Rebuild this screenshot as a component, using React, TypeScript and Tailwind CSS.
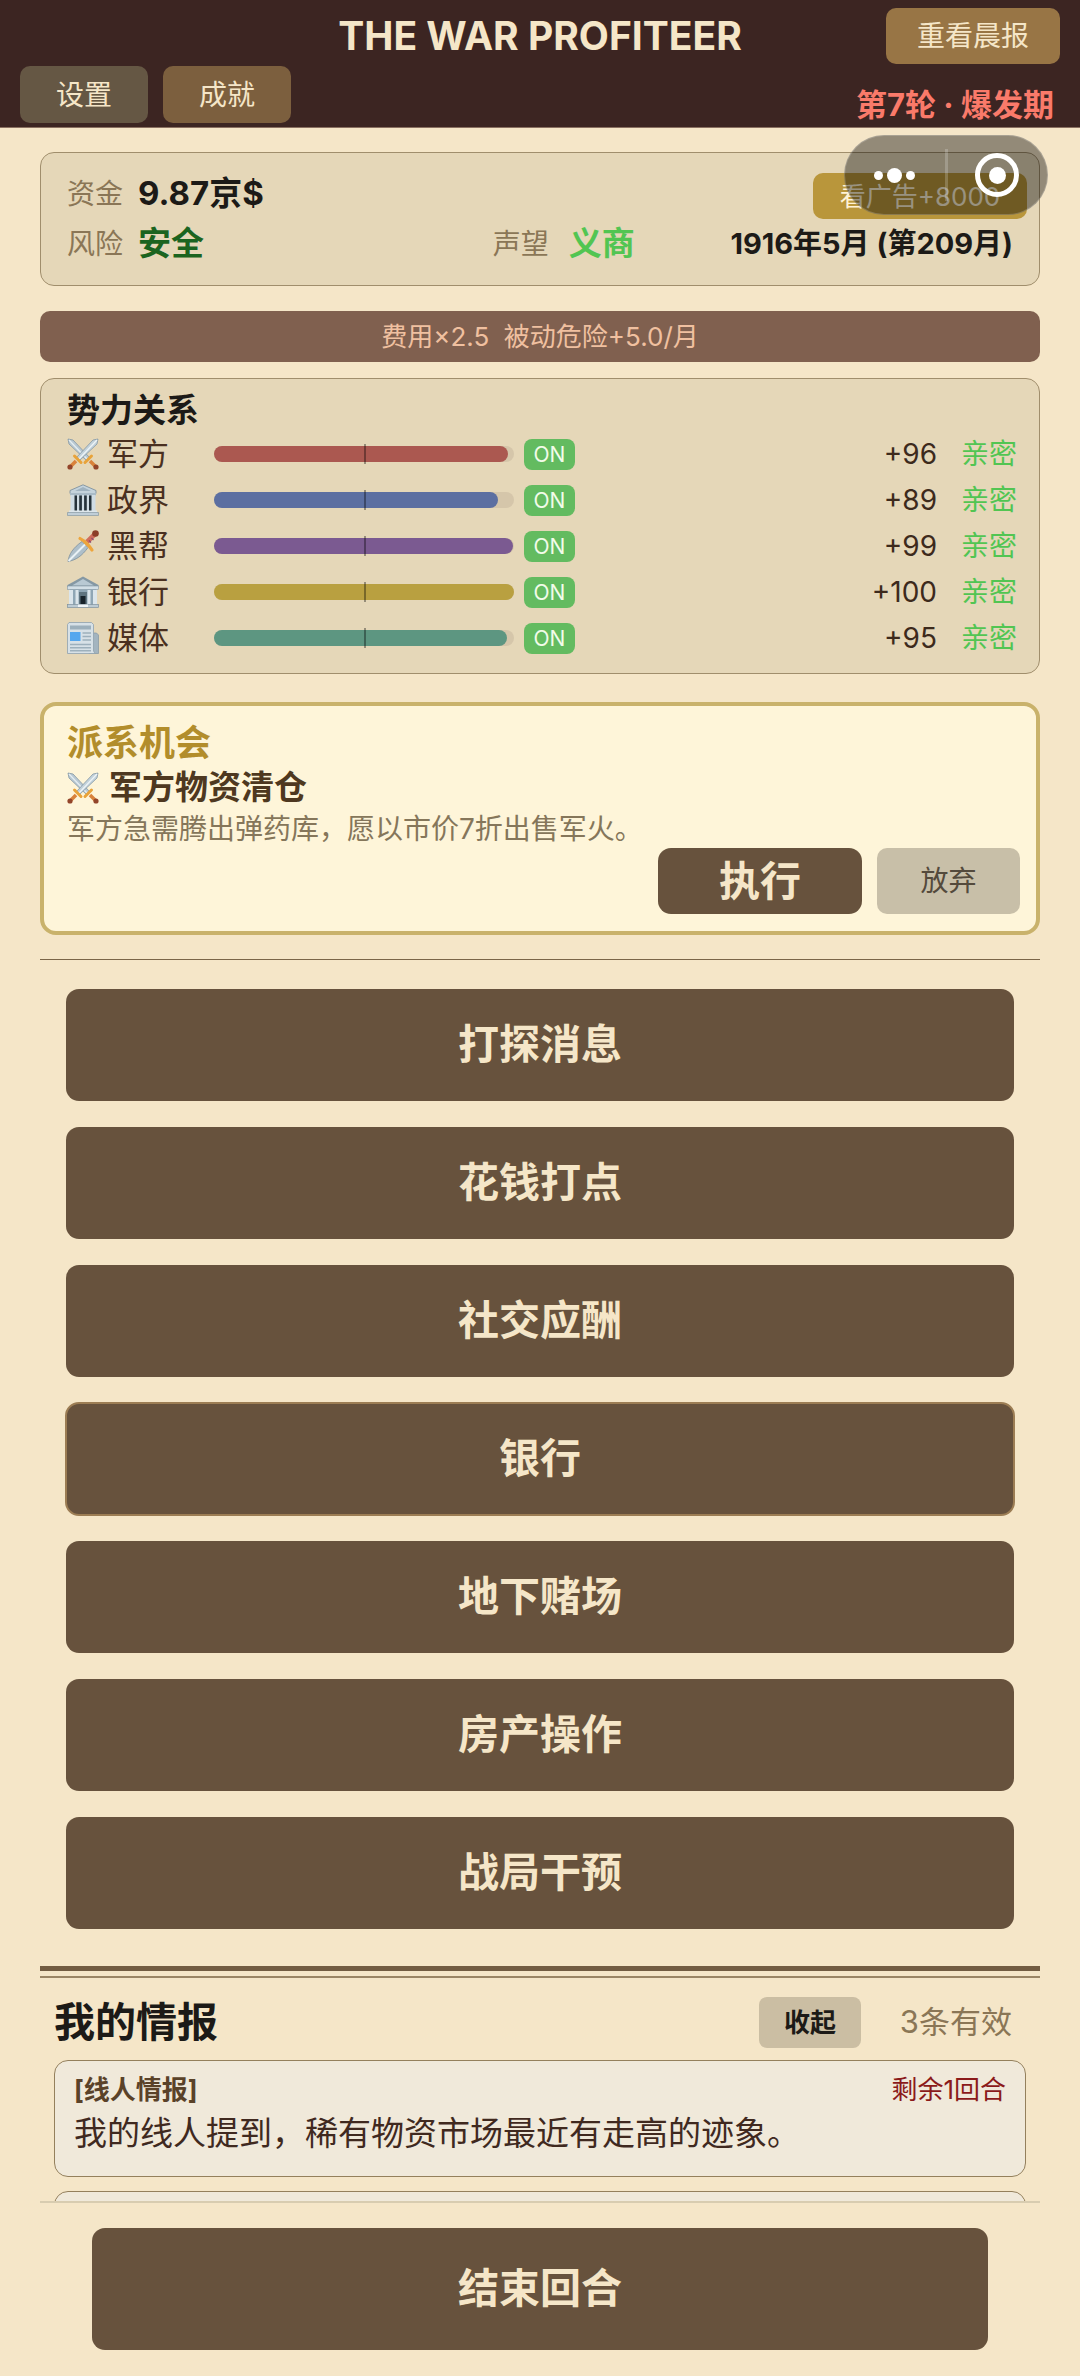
import React, { useState } from "react";

const SwordsIcon = () => (
  <svg viewBox="0 0 32 32" className="w-8 h-8 shrink-0" aria-hidden="true">
    <path d="M1 1l5 1 17 18-3 3L2 6z" fill="#b9c9d3" stroke="#8497a3" strokeWidth="0.8" />
    <path d="M2 2l18 19" stroke="#e6eef2" strokeWidth="1.2" />
    <path d="M18 24.500l6.500-6.500" stroke="#e8a33a" strokeWidth="3" strokeLinecap="round" />
    <path d="M23 23l5 5" stroke="#d9823b" strokeWidth="3.600" />
    <circle cx="29" cy="29" r="2.600" fill="#93452a" />
    <path d="M31 1l-5 1L9 20l3 3L30 6z" fill="#c3d2db" stroke="#8497a3" strokeWidth="0.8" />
    <path d="M30 2L12 21" stroke="#eef4f7" strokeWidth="1.2" />
    <path d="M14 24.500L7.500 18" stroke="#e8a33a" strokeWidth="3" strokeLinecap="round" />
    <path d="M9 23l-5 5" stroke="#d9823b" strokeWidth="3.600" />
    <circle cx="3" cy="29" r="2.600" fill="#93452a" />
  </svg>
);

const GovernmentIcon = () => (
  <svg viewBox="0 0 32 32" className="w-8 h-8 shrink-0" aria-hidden="true">
    <rect x="4" y="11" width="24" height="16" fill="#25323a" />
    <path d="M16 0.800L29 6.500v3H3v-3z" fill="#c4d3dc" stroke="#7f929e" strokeWidth="0.9" />
    <path d="M16 3l8 4H8z" fill="#9fb2bf" />
    <rect x="3" y="9" width="26" height="2.500" fill="#a9bbc7" />
    <g fill="#cfdce4">
      <rect x="3.500" y="11" width="4" height="16" />
      <rect x="10" y="11" width="2.200" height="16" />
      <rect x="14.900" y="11" width="2.200" height="16" />
      <rect x="19.800" y="11" width="2.200" height="16" />
      <rect x="24.500" y="11" width="4" height="16" />
    </g>
    <path d="M2 26.500h28v2.500H2z" fill="#dde6eb" />
    <path d="M0.500 28.500h31V31.500H0.500z" fill="#c0ced7" stroke="#8799a4" strokeWidth="0.7" />
  </svg>
);

const DaggerIcon = () => (
  <svg viewBox="0 0 32 32" className="w-8 h-8 shrink-0" aria-hidden="true">
    <path d="M1 31.500C2 24 6 18 15 11.500l6 6C15 26 9 30 1 31.500z" fill="#aebfca" stroke="#7d919d" strokeWidth="0.8" />
    <path d="M1.500 31L18 14.500" stroke="#e9f1f5" strokeWidth="2" />
    <path d="M20 12l8-8" stroke="#cf6d5c" strokeWidth="4.600" />
    <path d="M22 10.500l2 2M24.500 8l2 2" stroke="#8e4b6f" strokeWidth="1.200" />
    <path d="M13 8.500l4 2.500 5 5 3 4" fill="none" stroke="#eda53c" strokeWidth="3.200" strokeLinecap="round" strokeLinejoin="round" />
    <circle cx="28.500" cy="3.500" r="3.300" fill="#8b3d27" />
  </svg>
);

const BankIcon = () => (
  <svg viewBox="0 0 32 32" className="w-8 h-8 shrink-0" aria-hidden="true">
    <rect x="3" y="13" width="26" height="16" fill="#8fa6b5" />
    <path d="M16 0.500L31.500 9v2H0.500V9z" fill="#8598a4" />
    <path d="M16 3l11 6.500H5z" fill="#b9c9d3" />
    <rect x="0.500" y="10" width="31" height="3.500" fill="#d3dfe6" stroke="#8497a3" strokeWidth="0.6" />
    <g fill="#dbe5eb">
      <rect x="2" y="14" width="4" height="15" />
      <rect x="8.500" y="14" width="3" height="15" />
      <rect x="20.500" y="14" width="3" height="15" />
      <rect x="26" y="14" width="4" height="15" />
    </g>
    <rect x="12" y="16" width="8" height="13" fill="#5e737f" />
    <rect x="13.500" y="20" width="5" height="9" fill="#17222a" />
    <rect x="0.500" y="28.500" width="31" height="3" fill="#bccbd4" stroke="#7f929e" strokeWidth="0.7" />
    <rect x="11" y="28.500" width="10" height="2.500" fill="#eef3f6" />
  </svg>
);

const NewspaperIcon = () => (
  <svg viewBox="0 0 32 32" className="w-8 h-8 shrink-0" aria-hidden="true">
    <path d="M25 11h4.500l2 2v18.500H22z" fill="#a3b4bf" stroke="#8497a3" strokeWidth="0.7" />
    <path d="M0.500 2.500l1.500-2h22.500l2 2V29l1.500 2.500H0.500z" fill="#d7e1e7" stroke="#8fa1ad" strokeWidth="0.8" />
    <rect x="3" y="3.500" width="21" height="4" fill="#9db0bc" />
    <rect x="3" y="10" width="10.500" height="9" fill="#55a7ee" />
    <path d="M15.500 11h8.500M15.500 14.500h8.500M15.500 18h8.500M3 22.500h21M3 25.700h21M3 28.800h21" stroke="#9db0bc" strokeWidth="1.500" />
  </svg>
);

const factions = [
  { name: "军方", icon: <SwordsIcon />, score: 96, fill: 98, color: "bg-[#ab5850]" },
  { name: "政界", icon: <GovernmentIcon />, score: 89, fill: 94.5, color: "bg-[#5c6fa1]" },
  { name: "黑帮", icon: <DaggerIcon />, score: 99, fill: 99.5, color: "bg-[#7b5a91]" },
  { name: "银行", icon: <BankIcon />, score: 100, fill: 100, color: "bg-[#b9a040]" },
  { name: "媒体", icon: <NewspaperIcon />, score: 95, fill: 97.5, color: "bg-[#5d9681]" },
];

const actions = ["打探消息", "花钱打点", "社交应酬", "银行", "地下赌场", "房产操作", "战局干预"];

const Header = () => (
  <header className="grid grid-cols-[1fr_auto_1fr] gap-y-0.5 px-5 pt-2 pb-1 bg-[#3c2522] border-b border-[#8a7061] text-[#f5e6c8]">
    <h1 className="col-start-2 self-center text-[39px] leading-[56px] font-bold">THE WAR PROFITEER</h1>
    <button className="justify-self-end w-[174px] h-14 rounded-[10px] bg-[#987545] text-[28px]">重看晨报</button>
    <div className="flex gap-[15px]">
      <button className="w-32 h-[57px] rounded-[10px] bg-[#655744] text-[28px]">设置</button>
      <button className="w-32 h-[57px] rounded-[10px] bg-[#7c5f3e] text-[28px]">成就</button>
    </div>
    <p className="col-start-3 self-end justify-self-end pr-1.5 text-[31px] leading-9 font-bold text-[#fa7a6a]">
      第7轮 · 爆发期
    </p>
  </header>
);

// Floating host menu, sits over the page content
const Capsule = () => (
  <div className="absolute right-8 top-[135px] z-10 flex items-center w-[204px] h-20 rounded-full bg-black/40 border border-white/20">
    <button aria-label="更多" className="flex-1 flex items-center justify-center gap-1">
      <span className="w-[9px] h-[9px] rounded-full bg-white" />
      <span className="w-[15px] h-[15px] rounded-full bg-white" />
      <span className="w-[9px] h-[9px] rounded-full bg-white" />
    </button>
    <span className="w-[3px] h-[52px] bg-white/20" />
    <button aria-label="关闭" className="flex-1 flex items-center justify-center">
      <span className="flex items-center justify-center w-11 h-11 rounded-full border-[5px] border-white">
        <span className="w-[17px] h-[17px] rounded-full bg-white" />
      </span>
    </button>
  </div>
);

const Stats = () => (
  <section className="py-4 pl-[26px] pr-3 rounded-[14px] border border-[#a08e6c] bg-[#e5d7b8]">
    <div className="flex items-center h-[50px]">
      <span className="w-[71px] text-[28px] text-[#8a7656]">资金</span>
      <span className="flex-1 text-[33px] font-bold text-[#1c1a17]">9.87京$</span>
      <button className="self-end w-[214px] h-[46px] rounded-[10px] bg-[#b9963b] text-[26px] text-[#fff3d6]">
        看广告+8000
      </button>
    </div>
    <div className="flex items-center h-[50px] pr-3.5">
      <div className="flex items-center w-[45%]">
        <span className="w-[71px] text-[28px] text-[#8a7656]">风险</span>
        <span className="text-[33px] font-bold text-[#1b6420]">安全</span>
      </div>
      <span className="w-[76px] text-[28px] text-[#8a7656]">声望</span>
      <span className="flex-1 text-[33px] font-bold text-[#52c552]">义商</span>
      <span className="text-[29px] font-bold text-[#1c1a17]">1916年5月 (第209月)</span>
    </div>
  </section>
);

const Factions = () => (
  <section className="mt-4 pt-2.5 pb-3 pl-[26px] pr-[22px] rounded-[14px] border border-[#a08e6c] bg-[#e5d7b8]">
    <h2 className="text-[33px] leading-[42px] font-bold text-[#1c1a17]">势力关系</h2>
    <ul>
      {factions.map((f) => (
        <li key={f.name} className="flex items-center h-[46px] text-[31px] text-[#4a3020]">
          {f.icon}
          <span className="w-[115px] pl-2">{f.name}</span>
          <div className="relative w-[300px] h-4 rounded-full bg-[#d5c6aa]">
            <div className={`h-full rounded-full ${f.color}`} style={{ width: `${f.fill}%` }} />
            <span className="absolute left-1/2 -top-0.5 w-0.5 h-5 bg-black/35" />
          </div>
          <button className="ml-2.5 w-[51px] h-[31px] rounded-lg bg-[#63bb60] text-[21px] leading-[31px] text-[#f2fbe9]">ON</button>
          <span className="flex-1 text-right text-[28px] text-[#3d2a1c]">+{f.score}</span>
          <span className="w-20 text-right text-[28px] text-[#52c552]">亲密</span>
        </li>
      ))}
    </ul>
  </section>
);

const Opportunity = () => (
  <section className="mt-7 pt-3.5 pb-[17px] pl-[23px] pr-4 rounded-2xl border-4 border-[#c9b26b] bg-[#fef5d9]">
    <h2 className="text-[36px] leading-[46px] font-bold text-[#b28d2b]">派系机会</h2>
    <h3 className="flex items-center h-11 gap-2.5 text-[33px] font-bold text-[#4e3820]">
      <SwordsIcon />
      军方物资清仓
    </h3>
    <p className="text-[28px] leading-[38px] text-[#85765a]">军方急需腾出弹药库，愿以市价7折出售军火。</p>
    <div className="flex justify-end gap-[15px]">
      <button className="w-[204px] h-[66px] rounded-[13px] bg-[#67523d] text-[41px] leading-[60px] font-bold text-[#f5e6c8]">执行</button>
      <button className="w-[143px] h-[66px] rounded-[10px] bg-[#c8bfa8] text-[28px] text-[#544a3c]">放弃</button>
    </div>
  </section>
);

const Intel = ({ open, onToggle }: { open: boolean; onToggle: () => void }) => (
  <section className="px-[14px]">
    <div className="flex items-center mt-[19px] mb-3">
      <h2 className="flex-1 text-[41px] leading-[51px] font-bold text-[#1c1a17]">我的情报</h2>
      <button onClick={onToggle} className="w-[102px] h-[51px] rounded-lg bg-[#cbbea3] text-[26px] font-bold text-[#1c1a17]">
        收起
      </button>
      <span className="w-[165px] pr-[14px] text-right text-[31px] text-[#8a7656]">3条有效</span>
    </div>
    {open && (
      <div className="flex flex-col gap-[14px]">
        <article className="min-h-[117px] pt-2 px-[19px] rounded-[14px] border border-[#94805c] bg-[#f0e9da]">
          <div className="flex justify-between text-[26px] leading-[42px]">
            <h3 className="font-bold text-[#5a4229]">[线人情报]</h3>
            <span className="text-[#8b1a1a]">剩余1回合</span>
          </div>
          <p className="text-[33px] leading-[44px] text-[#40291f]">我的线人提到，稀有物资市场最近有走高的迹象。</p>
        </article>
        <article className="min-h-[117px] rounded-[14px] border border-[#94805c] bg-[#f0e9da]" />
      </div>
    )}
  </section>
);

export default function App() {
  const [intelOpen, setIntelOpen] = useState(true);

  return (
    <div className="relative flex flex-col h-screen bg-[#f5e6c8] font-[MiSans,Inter,'Noto_Sans_CJK_SC',sans-serif]">
      <Header />
      <Capsule />

      <main className="flex-1 min-h-0 overflow-y-auto [scrollbar-width:none] px-10 pt-6">
        <Stats />
        <p className="mt-[25px] rounded-[10px] bg-[#80604f] text-center text-[26px] leading-[51px] text-[#f0c0a0] whitespace-pre">
          {"费用×2.5  被动危险+5.0/月"}
        </p>
        <Factions />
        <Opportunity />

        <hr className="mt-6 border-[#7a6548]" />

        {/* Actions */}
        <div className="flex flex-col gap-[26px] mt-[29px] px-[26px]">
          {actions.map((name) => (
            <button
              key={name}
              className={`h-28 rounded-[13px] bg-[#67523d] text-[41px] font-bold text-[#f5e6c8] ${
                name === "银行" ? "outline-2 -outline-offset-1 outline-[#9c7d54]" : ""
              }`}
            >
              {name}
            </button>
          ))}
        </div>

        <div className="mt-[37px] h-3 border-t-[5px] border-b-2 border-t-[#725c42] border-b-[#9a8565]" />
        <Intel open={intelOpen} onToggle={() => setIntelOpen(!intelOpen)} />
      </main>

      <footer className="mx-10 px-[52px] pt-[25px] pb-[26px] border-t-2 border-[#d8ccb0]">
        <button className="w-full h-[122px] rounded-[13px] bg-[#67523d] text-[41px] font-bold text-[#f5e6c8]">结束回合</button>
      </footer>
    </div>
  );
}
